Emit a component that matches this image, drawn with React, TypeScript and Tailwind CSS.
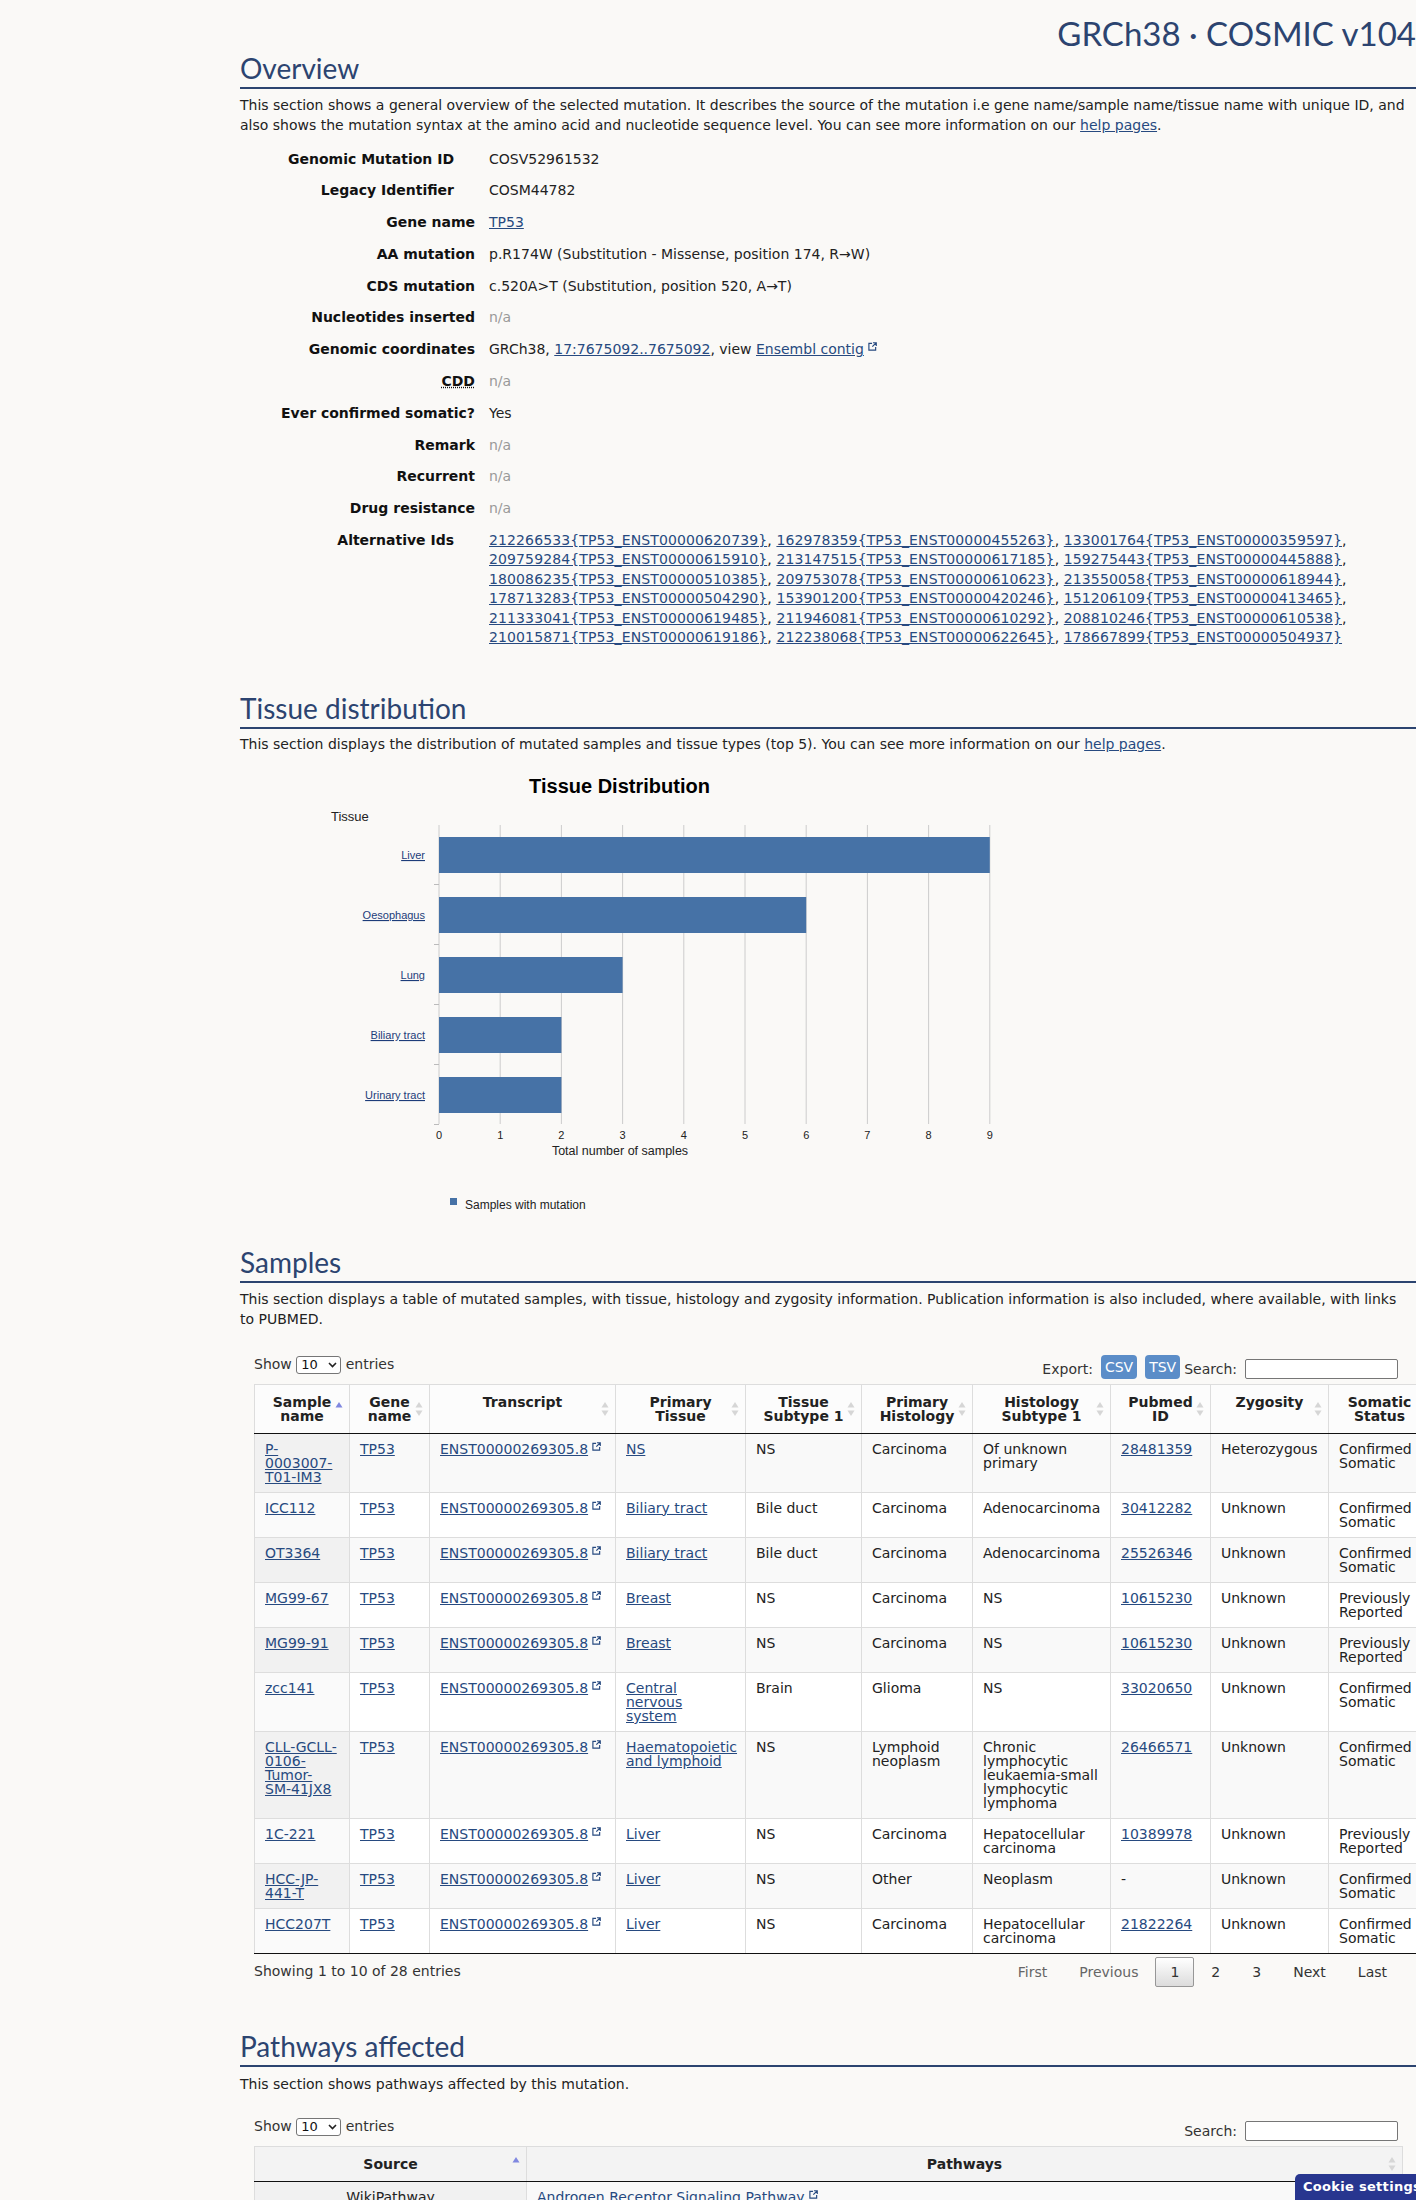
import React from "react";

const LINK = "text-[#274a80] underline";
const HEAD = "font-['Lato',sans-serif] text-[28px] leading-[34px] text-[#2c4470] pb-[2px] border-b-2 border-[#2c4470]";

const Ext = () => (
  <svg width="9" height="9" viewBox="0 0 10 10" className="inline-block ml-[4px] align-[3px]" fill="none" stroke="#274a80" strokeWidth="1.3">
    <path d="M4.5 1.5H1v7.5h7.5V5.5" />
    <path d="M5.5 0.8H9.2V4.5M9.2 0.8L4.8 5.2" />
  </svg>
);

const NA = () => <span className="text-[#999]">n/a</span>;

const Sort = ({ active }: { active?: boolean }) => (
  <svg width="8" height="16" viewBox="0 0 8 16" className="absolute right-[6px] top-1/2 -translate-y-1/2">
    <path d="M4 1L7.5 6.5H0.5Z" fill={active ? "#8088e0" : "#d6d6d6"} />
    {!active && <path d="M4 15L7.5 9.5H0.5Z" fill="#d6d6d6" />}
  </svg>
);

const Select = () => (
  <span className="inline-flex items-center justify-between w-[45px] h-[18px] border border-[#767676] rounded-[3px] bg-white pl-[4px] pr-[3px] text-[13px] leading-[16px] align-middle text-[#111]">
    10
    <svg width="9" height="6" viewBox="0 0 9 6" fill="none" stroke="#222" strokeWidth="1.6">
      <path d="M1 1l3.5 3.5L8 1" />
    </svg>
  </span>
);

const altIds = [
  ["212266533{TP53_ENST00000620739}", "162978359{TP53_ENST00000455263}", "133001764{TP53_ENST00000359597}"],
  ["209759284{TP53_ENST00000615910}", "213147515{TP53_ENST00000617185}", "159275443{TP53_ENST00000445888}"],
  ["180086235{TP53_ENST00000510385}", "209753078{TP53_ENST00000610623}", "213550058{TP53_ENST00000618944}"],
  ["178713283{TP53_ENST00000504290}", "153901200{TP53_ENST00000420246}", "151206109{TP53_ENST00000413465}"],
  ["211333041{TP53_ENST00000619485}", "211946081{TP53_ENST00000610292}", "208810246{TP53_ENST00000610538}"],
  ["210015871{TP53_ENST00000619186}", "212238068{TP53_ENST00000622645}", "178667899{TP53_ENST00000504937}"],
];

type Row = { label: React.ReactNode; value: React.ReactNode; pad?: boolean };

const overview: Row[] = [
  { label: "Genomic Mutation ID", value: "COSV52961532", pad: true },
  { label: "Legacy Identifier", value: "COSM44782", pad: true },
  { label: "Gene name", value: <a className={LINK}>TP53</a> },
  { label: "AA mutation", value: "p.R174W (Substitution - Missense, position 174, R→W)" },
  { label: "CDS mutation", value: "c.520A>T (Substitution, position 520, A→T)" },
  { label: "Nucleotides inserted", value: <NA /> },
  {
    label: "Genomic coordinates",
    value: (
      <>
        GRCh38, <a className={LINK}>17:7675092..7675092</a>, view <a className={LINK}>Ensembl contig</a>
        <Ext />
      </>
    ),
  },
  { label: <abbr className="underline decoration-dotted">CDD</abbr>, value: <NA /> },
  { label: "Ever confirmed somatic?", value: "Yes" },
  { label: "Remark", value: <NA /> },
  { label: "Recurrent", value: <NA /> },
  { label: "Drug resistance", value: <NA /> },
];

const bars: [string, number][] = [
  ["Liver", 9],
  ["Oesophagus", 6],
  ["Lung", 3],
  ["Biliary tract", 2],
  ["Urinary tract", 2],
];

const Chart = () => {
  const x0 = 199;
  const u = 61.2;
  const F = "Liberation Sans, Arial, sans-serif";
  return (
    <svg width="800" height="491" className="block">
      <text x="379.5" y="39" textAnchor="middle" fontFamily={F} fontSize="20" fontWeight="bold" fill="#000">
        Tissue Distribution
      </text>
      <text x="91" y="67" fontFamily={F} fontSize="13" fill="#222">
        Tissue
      </text>
      {Array.from({ length: 10 }).map((_, i) => (
        <line key={i} x1={x0 + i * u} x2={x0 + i * u} y1={71} y2={370} stroke="#cccccc" strokeWidth="1" />
      ))}
      {[1, 2, 3, 4, 5].map((j) => (
        <line key={j} x1={194} x2={199} y1={70.5 + 60 * j} y2={70.5 + 60 * j} stroke="#bbbbbb" strokeWidth="1" />
      ))}
      {bars.map(([name, v], i) => (
        <g key={name}>
          <rect x={x0} y={83 + 60 * i} width={v * u} height={36} fill="#4672a6" />
          <text x={185} y={105 + 60 * i} textAnchor="end" fontFamily={F} fontSize="11" fill="#1d3d7a" textDecoration="underline">
            {name}
          </text>
        </g>
      ))}
      {Array.from({ length: 10 }).map((_, i) => (
        <text key={i} x={x0 + i * u} y={385} textAnchor="middle" fontFamily={F} fontSize="11" fill="#222">
          {i}
        </text>
      ))}
      <text x="380" y="400.5" textAnchor="middle" fontFamily={F} fontSize="12.5" fill="#222">
        Total number of samples
      </text>
      <rect x="210" y="444" width="7" height="7" fill="#4672a6" />
      <text x="225" y="455" fontFamily={F} fontSize="12" fill="#222">
        Samples with mutation
      </text>
    </svg>
  );
};

const br = (s: string) =>
  s.split("|").map((p, i, a) => (
    <React.Fragment key={i}>
      {p}
      {i < a.length - 1 && <br />}
    </React.Fragment>
  ));

type Sample = {
  name: string;
  tissue: string;
  sub: string;
  hist: string;
  hsub: string;
  pm: string;
  zyg: string;
  status: string;
};

const samples: Sample[] = [
  { name: "P-|0003007-|T01-IM3", tissue: "NS", sub: "NS", hist: "Carcinoma", hsub: "Of unknown|primary", pm: "28481359", zyg: "Heterozygous", status: "Confirmed|Somatic" },
  { name: "ICC112", tissue: "Biliary tract", sub: "Bile duct", hist: "Carcinoma", hsub: "Adenocarcinoma", pm: "30412282", zyg: "Unknown", status: "Confirmed|Somatic" },
  { name: "OT3364", tissue: "Biliary tract", sub: "Bile duct", hist: "Carcinoma", hsub: "Adenocarcinoma", pm: "25526346", zyg: "Unknown", status: "Confirmed|Somatic" },
  { name: "MG99-67", tissue: "Breast", sub: "NS", hist: "Carcinoma", hsub: "NS", pm: "10615230", zyg: "Unknown", status: "Previously|Reported" },
  { name: "MG99-91", tissue: "Breast", sub: "NS", hist: "Carcinoma", hsub: "NS", pm: "10615230", zyg: "Unknown", status: "Previously|Reported" },
  { name: "zcc141", tissue: "Central|nervous|system", sub: "Brain", hist: "Glioma", hsub: "NS", pm: "33020650", zyg: "Unknown", status: "Confirmed|Somatic" },
  { name: "CLL-GCLL-|0106-|Tumor-|SM-41JX8", tissue: "Haematopoietic|and lymphoid", sub: "NS", hist: "Lymphoid|neoplasm", hsub: "Chronic|lymphocytic|leukaemia-small|lymphocytic|lymphoma", pm: "26466571", zyg: "Unknown", status: "Confirmed|Somatic" },
  { name: "1C-221", tissue: "Liver", sub: "NS", hist: "Carcinoma", hsub: "Hepatocellular|carcinoma", pm: "10389978", zyg: "Unknown", status: "Previously|Reported" },
  { name: "HCC-JP-|441-T", tissue: "Liver", sub: "NS", hist: "Other", hsub: "Neoplasm", pm: "-", zyg: "Unknown", status: "Confirmed|Somatic" },
  { name: "HCC207T", tissue: "Liver", sub: "NS", hist: "Carcinoma", hsub: "Hepatocellular|carcinoma", pm: "21822264", zyg: "Unknown", status: "Confirmed|Somatic" },
];

const headers: [string, boolean | undefined][] = [
  ["Sample|name", true],
  ["Gene|name", false],
  ["Transcript", false],
  ["Primary|Tissue", false],
  ["Tissue|Subtype 1", false],
  ["Primary|Histology", false],
  ["Histology|Subtype 1", false],
  ["Pubmed|ID", false],
  ["Zygosity", false],
  ["Somatic|Status", false],
];

const colW = [95, 80, 186, 130, 116, 111, 138, 100, 118, 102];

const TH = "relative px-[10px] py-[10px] align-top text-center font-bold leading-[14px] border-t border-r border-[#dddddd] border-b border-b-[#111111]";

export default function App() {
  return (
    <div className="h-[2200px] overflow-hidden bg-[#faf9f7] font-['DejaVu_Sans',sans-serif] text-[14px] text-[#222]">
      <div className="ml-[240px] w-[1180px] pt-[17px]">
        <div className="text-right pr-[4px] h-[33px] leading-[33px] text-[33px] font-['Lato',sans-serif] text-[#2c4470]">
          GRCh38 · COSMIC v104
        </div>

        {/* Overview */}
        <h2 className={HEAD + " mt-[1px]"}>Overview</h2>
        <p className="mt-[5.5px] leading-[20px]">
          This section shows a general overview of the selected mutation. It describes the source of the mutation i.e gene name/sample name/tissue name with unique ID, and also shows the mutation syntax at the amino acid and nucleotide sequence level. You can see more information on our{" "}
          <a className={LINK}>help pages</a>.
        </p>
        <dl className="mt-[15px] grid grid-cols-[235px_1fr] gap-x-[14px] gap-y-[12.2px] leading-[19.6px]">
          {overview.map((r, i) => (
            <React.Fragment key={i}>
              <dt className={"text-right font-bold text-[#111] " + (r.pad ? "pr-[21px]" : "")}>{r.label}</dt>
              <dd>{r.value}</dd>
            </React.Fragment>
          ))}
          <dt className="text-right font-bold text-[#111] pr-[21px]">Alternative Ids</dt>
          <dd className="leading-[19.5px] whitespace-nowrap tracking-[0.12px]">
            {altIds.map((line, li) => (
              <div key={li}>
                {line.map((id, k) => (
                  <React.Fragment key={k}>
                    <a className={LINK}>{id}</a>
                    {li === altIds.length - 1 && k === line.length - 1 ? "" : ", "}
                  </React.Fragment>
                ))}
              </div>
            ))}
          </dd>
        </dl>

        {/* Tissue distribution */}
        <h2 className={HEAD + " mt-[43px]"}>Tissue distribution</h2>
        <p className="mt-[5.5px] leading-[20px]">
          This section displays the distribution of mutated samples and tissue types (top 5). You can see more information on our{" "}
          <a className={LINK}>help pages</a>.
        </p>
        <Chart />

        {/* Samples */}
        <h2 className={HEAD}>Samples</h2>
        <p className="mt-[5.5px] leading-[20px]">
          This section displays a table of mutated samples, with tissue, histology and zygosity information. Publication information is also included, where available, with links
          <br />
          to PUBMED.
        </p>

        <div className="ml-[14px] w-[1148px]">
          <div className="mt-[21px] h-[32px] flex justify-between items-start text-[#333]">
            <div className="pt-[5px] leading-[18px]">
              Show <Select /> entries
            </div>
            <div className="pt-[5px] mr-[4px] flex items-end leading-[20px]">
              <span>Export:</span>
              <span className="ml-[8px] h-[24px] px-[4px] rounded-[4px] bg-[#5b8dc8] text-white leading-[24px]">CSV</span>
              <span className="ml-[8px] h-[24px] px-[4px] rounded-[4px] bg-[#5b8dc8] text-white leading-[24px]">TSV</span>
              <span className="ml-[4px]">Search:</span>
              <span className="ml-[8px] w-[153px] h-[20px] border border-[#767676] rounded-[2px] bg-white" />
            </div>
          </div>

          <table className="mt-[2px] table-fixed border-collapse w-[1176px] border-l border-[#dddddd]">
            <colgroup>
              {colW.map((w, i) => (
                <col key={i} style={{ width: w }} />
              ))}
            </colgroup>
            <thead>
              <tr className="bg-[#fcfcfc]">
                {headers.map(([h, act]) => (
                  <th key={h} className={TH}>
                    {br(h)}
                    <Sort active={act} />
                  </th>
                ))}
              </tr>
            </thead>
            <tbody>
              {samples.map((s, i) => {
                const odd = i % 2 === 0;
                const last = i === samples.length - 1;
                const td =
                  "px-[10px] py-[8px] align-top leading-[14px] border-r border-[#dddddd] border-b " +
                  (last ? "border-b-[#111111]" : "border-b-[#dddddd]");
                return (
                  <tr key={i} className={odd ? "bg-[#f9f9f9]" : "bg-white"}>
                    <td className={td + (odd ? " bg-[#f1f1f1]" : " bg-[#fafafa]")}>
                      <a className={LINK}>{br(s.name)}</a>
                    </td>
                    <td className={td}>
                      <a className={LINK}>TP53</a>
                    </td>
                    <td className={td + " whitespace-nowrap"}>
                      <a className={LINK}>ENST00000269305.8</a>
                      <Ext />
                    </td>
                    <td className={td}>
                      <a className={LINK}>{br(s.tissue)}</a>
                    </td>
                    <td className={td}>{s.sub}</td>
                    <td className={td}>{br(s.hist)}</td>
                    <td className={td}>{br(s.hsub)}</td>
                    <td className={td}>{s.pm === "-" ? "-" : <a className={LINK}>{s.pm}</a>}</td>
                    <td className={td}>{s.zyg}</td>
                    <td className={td}>{br(s.status)}</td>
                  </tr>
                );
              })}
            </tbody>
          </table>

          <div className="mt-[3px] h-[30px] flex justify-between items-center text-[#333]">
            <div>Showing 1 to 10 of 28 entries</div>
            <div className="flex items-center leading-[14px]">
              <span className="ml-[2px] px-[14px] py-[7px] border border-transparent text-[#666]">First</span>
              <span className="ml-[2px] px-[14px] py-[7px] border border-transparent text-[#666]">Previous</span>
              <span className="ml-[2px] px-[14px] py-[7px] border border-[#979797] rounded-[2px] bg-gradient-to-b from-white to-[#dcdcdc] text-[#333]">1</span>
              <span className="ml-[2px] px-[14px] py-[7px] border border-transparent">2</span>
              <span className="ml-[2px] px-[14px] py-[7px] border border-transparent">3</span>
              <span className="ml-[2px] px-[14px] py-[7px] border border-transparent">Next</span>
              <span className="ml-[2px] px-[14px] py-[7px] border border-transparent">Last</span>
            </div>
          </div>
        </div>

        {/* Pathways */}
        <h2 className={HEAD + " mt-[42.5px]"}>Pathways affected</h2>
        <p className="mt-[6.5px] leading-[20px]">This section shows pathways affected by this mutation.</p>

        <div className="ml-[14px] w-[1148px]">
          <div className="mt-[22px] h-[30px] flex justify-between items-start text-[#333]">
            <div className="pt-[1px] leading-[18px]">
              Show <Select /> entries
            </div>
            <div className="pt-[5px] mr-[4px] flex items-end leading-[20px]">
              <span>Search:</span>
              <span className="ml-[8px] w-[153px] h-[20px] border border-[#767676] rounded-[2px] bg-white" />
            </div>
          </div>
          <table className="table-fixed border-collapse w-[1148px] border-l border-[#dddddd]">
            <colgroup>
              <col style={{ width: 272 }} />
              <col style={{ width: 876 }} />
            </colgroup>
            <thead>
              <tr className="bg-[#f3f3f3]">
                <th className={TH}>
                  Source
                  <Sort active />
                </th>
                <th className={TH}>
                  Pathways
                  <Sort />
                </th>
              </tr>
            </thead>
            <tbody>
              {["Androgen Receptor Signaling Pathway", "Apoptosis", "Cell Cycle"].map((p, i) => {
                const odd = i % 2 === 0;
                const td = "px-[10px] py-[8px] align-top leading-[14px] border-r border-b border-[#dddddd]";
                return (
                  <tr key={p} className={odd ? "bg-[#f9f9f9]" : "bg-white"}>
                    <td className={td + " text-center" + (odd ? " bg-[#f1f1f1]" : " bg-[#fafafa]")}>WikiPathway</td>
                    <td className={td}>
                      <a className={LINK}>{p}</a>
                      <Ext />
                    </td>
                  </tr>
                );
              })}
            </tbody>
          </table>
        </div>
      </div>

      <div className="fixed bottom-0 right-0 w-[121px] h-[26px] overflow-hidden whitespace-nowrap bg-[#28368f] rounded-tl-[5px] pl-[8px] text-white font-bold text-[13px] leading-[26px] tracking-[0.3px]">
        Cookie settings
      </div>
    </div>
  );
}
